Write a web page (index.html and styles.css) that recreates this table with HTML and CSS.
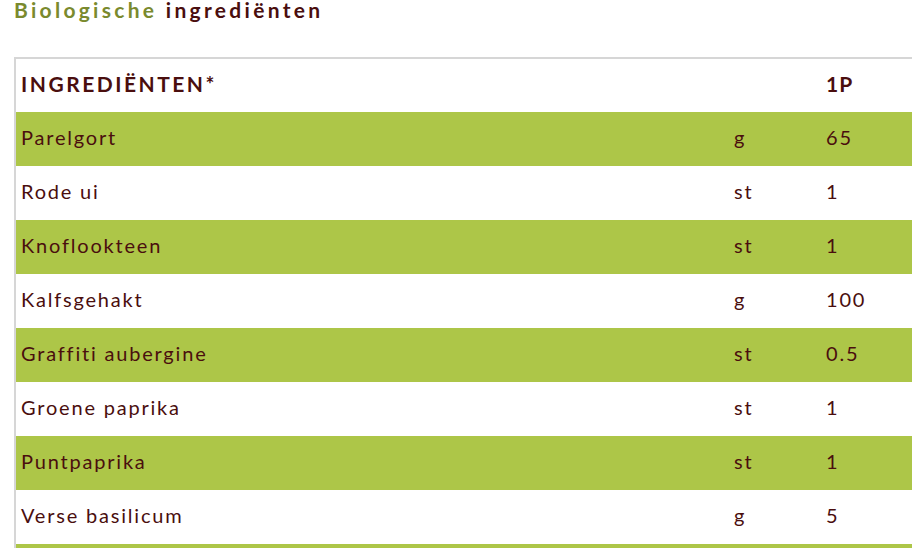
FILE: index.html
```html
<!DOCTYPE html>
<html lang="nl">
<head>
<meta charset="utf-8">
<link rel="stylesheet" href="styles.css">
</head>
<body>
<h2 class="title"><span class="bio">Biologische</span> ingrediënten</h2>
<table class="ing">
  <thead>
    <tr><th class="name">INGREDIËNTEN*</th><th class="unit"></th><th class="qty">1P</th></tr>
  </thead>
  <tbody>
    <tr class="g"><td>Parelgort</td><td>g</td><td>65</td></tr>
    <tr><td>Rode ui</td><td>st</td><td>1</td></tr>
    <tr class="g"><td>Knoflookteen</td><td>st</td><td>1</td></tr>
    <tr><td>Kalfsgehakt</td><td>g</td><td>100</td></tr>
    <tr class="g"><td>Graffiti aubergine</td><td>st</td><td>0.5</td></tr>
    <tr><td>Groene paprika</td><td>st</td><td>1</td></tr>
    <tr class="g"><td>Puntpaprika</td><td>st</td><td>1</td></tr>
    <tr><td>Verse basilicum</td><td>g</td><td>5</td></tr>
    <tr class="g"><td>&nbsp;</td><td></td><td></td></tr>
  </tbody>
</table>
</body>
</html>
```
FILE: styles.css
```css
html, body { margin: 0; padding: 0; background: #fff; }
body {
  padding: 0 0 0 14px;
  font-family: Lato, "Open Sans", sans-serif;
  color: #4a0e0e;
  overflow: hidden;
}
.title {
  margin: 0;
  font-size: 21px;
  line-height: 20px;
  font-weight: 700;
  letter-spacing: 3.3px;
  color: #4a0e0e;
}
.bio { color: #7a8a2e; }
.ing {
  margin-top: 37px;
  width: 930px;
  border-collapse: collapse;
  border-top: 2px solid #d6d6d6;
  border-left: 2px solid #d6d6d6;
}
.ing th, .ing td {
  height: 54px;
  padding: 0 0 4px 5px;
  text-align: left;
  vertical-align: middle;
  font-size: 20px;
  box-sizing: border-box;
}
.ing th {
  height: 54px;
  font-weight: 700;
  letter-spacing: 2.5px;
  font-size: 21px;
}
.ing th.qty { letter-spacing: 1px; }
.ing td { font-weight: 400; letter-spacing: 1.8px; }
.ing .name { width: 714px; }
.ing .unit { width: 92px; }
.ing tr.g { background: #adc648; }
```
